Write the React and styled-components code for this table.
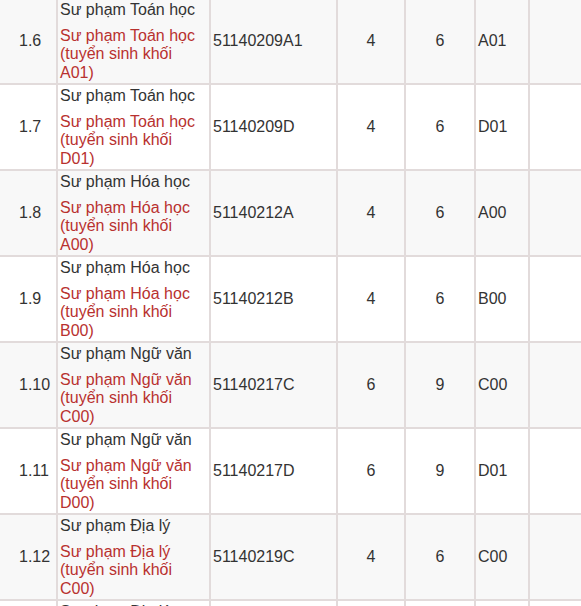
import React from 'react';
import styled, { createGlobalStyle } from 'styled-components';

const GlobalStyle = createGlobalStyle`
  html, body {
    margin: 0;
    padding: 0;
    background: #fff;
    overflow: hidden;
  }
  body {
    font-family: "Liberation Sans", Arial, sans-serif;
    color: #333;
  }
`;

const Page = styled.div`
  width: 581px;
  height: 606px;
  overflow: hidden;
`;

const Table = styled.table`
  table-layout: fixed;
  border-collapse: separate;
  border-spacing: 0;
  width: 640px;
  margin: -2px 0 0 -1px;
  font-size: 16px;
  line-height: 18.5px;
`;

const Row = styled.tr`
  background: ${(p) => (p.$striped ? '#f8f8f8' : '#fff')};
`;

const Cell = styled.td`
  box-sizing: border-box;
  border: 1px solid #e2dbdb;
  padding: 2px 2px 1px 2px;
  vertical-align: middle;
  text-align: ${(p) => p.$align || 'left'};
  width: ${(p) => p.$w}px;
`;

const NumCell = styled(Cell)`
  padding-left: 19px;
`;

const Name = styled.div`
  color: #333;
`;

const Sub = styled.div`
  margin-top: 7px;
  color: #b8312f;
`;

const widths = [58, 153, 127, 68, 70, 54, 110];

const rows = [
  { no: '1.6', name: 'Sư phạm Toán học', group: 'A01', code: '51140209A1', a: 4, b: 6, block: 'A01' },
  { no: '1.7', name: 'Sư phạm Toán học', group: 'D01', code: '51140209D', a: 4, b: 6, block: 'D01' },
  { no: '1.8', name: 'Sư phạm Hóa học', group: 'A00', code: '51140212A', a: 4, b: 6, block: 'A00' },
  { no: '1.9', name: 'Sư phạm Hóa học', group: 'B00', code: '51140212B', a: 4, b: 6, block: 'B00' },
  { no: '1.10', name: 'Sư phạm Ngữ văn', group: 'C00', code: '51140217C', a: 6, b: 9, block: 'C00' },
  { no: '1.11', name: 'Sư phạm Ngữ văn', group: 'D00', code: '51140217D', a: 6, b: 9, block: 'D01' },
  { no: '1.12', name: 'Sư phạm Địa lý', group: 'C00', code: '51140219C', a: 4, b: 6, block: 'C00' },
  { no: '1.13', name: 'Sư phạm Địa lý', group: 'D15', code: '51140219D', a: 4, b: 6, block: 'D15' },
];

export default function App() {
  return (
    <>
      <GlobalStyle />
      <Page>
        <Table>
          <tbody>
            {rows.map((r, i) => (
              <Row key={r.no} $striped={i % 2 === 0}>
                <NumCell $w={widths[0]}>{r.no}</NumCell>
                <Cell $w={widths[1]}>
                  <Name>{r.name}</Name>
                  <Sub>
                    {r.name} (tuyển sinh khối {r.group})
                  </Sub>
                </Cell>
                <Cell $w={widths[2]}>{r.code}</Cell>
                <Cell $w={widths[3]} $align="center">{r.a}</Cell>
                <Cell $w={widths[4]} $align="center">{r.b}</Cell>
                <Cell $w={widths[5]}>{r.block}</Cell>
                <Cell $w={widths[6]} />
              </Row>
            ))}
          </tbody>
        </Table>
      </Page>
    </>
  );
}
